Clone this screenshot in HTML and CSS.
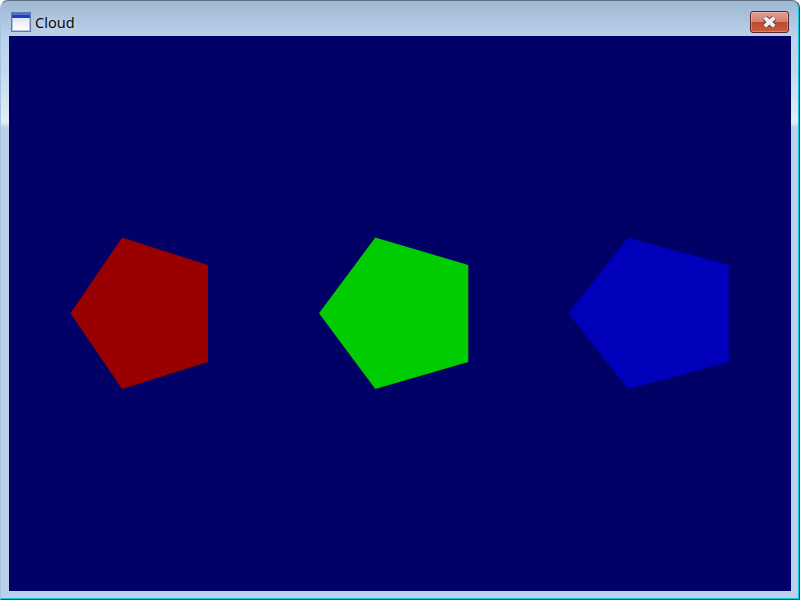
FILE: index.html
```html
<html lang="en">
<head>
  <meta charset="UTF-8">
  <meta name="viewport" content="width=device-width, initial-scale=1.0">
  <title>Cloud</title>
  <link rel="stylesheet" href="styles.css">
</head>
<body>
  <div class="window">
    <div class="titlebar">
      <svg class="app-icon" viewBox="0 0 20 20">
        <defs>
          <linearGradient id="iconBody" x1="0" y1="0" x2="0" y2="1">
            <stop offset="0" stop-color="#dfe5f2"/>
            <stop offset="1" stop-color="#ffffff"/>
          </linearGradient>
        </defs>
        <rect x="0.5" y="0.5" width="19" height="19" fill="#b4c0d8" stroke="#6478a4"/>
        <rect x="1" y="1" width="18" height="5" fill="#1c3fcc"/>
        <rect x="1" y="1" width="18" height="2" fill="#4a70e8"/>
        <rect x="2" y="6" width="16" height="12" fill="url(#iconBody)"/>
      </svg>
      <span class="title">Cloud</span>
      <button class="close-button">
        <svg viewBox="0 0 39 22">
          <path d="M14.8 6.8 L24.2 15.2 M24.2 6.8 L14.8 15.2" fill="none" stroke="#5a2c2a" stroke-width="5.6"/>
          <path d="M14.8 6.8 L24.2 15.2 M24.2 6.8 L14.8 15.2" fill="none" stroke="#eceef3" stroke-width="4"/>
        </svg>
      </button>
    </div>
    <div class="canvas">
      <svg class="scene" viewBox="0 0 782 555">
        <polygon class="red" points="61.5,277.3 113,201.5 199,229 199,326 113,353"/>
        <polygon class="green" points="310,277.3 366.3,201.5 459.3,229 459.3,326 366.3,353"/>
        <polygon class="blue" points="559.3,277.3 619,201.5 719.6,229 719.6,326 619,353"/>
      </svg>
    </div>
  </div>
</body>
</html>
```

FILE: styles.css
```css
* {
  box-sizing: border-box;
  margin: 0;
  padding: 0;
}

body {
  width: 800px;
  height: 600px;
  overflow: hidden;
  background: #ffffff;
}

.window {
  width: 800px;
  height: 600px;
  display: flex;
  flex-direction: column;
  padding: 0 8px 8px 8px;
  border: 1px solid #3c4a54;
  border-top-color: #5f6e7c;
  border-left-color: #a4c4e0;
  border-radius: 8px 8px 0 0;
  box-shadow: inset -1px -1px 0 #12c4e0;
  background: linear-gradient(180deg, #9fb8d3 0, #b9d1ea 35px, #c4d9ee 70px, #e2edf8 122px, #b9d1ea 126px, #b9d1ea 100%);
}

.titlebar {
  height: 35px;
  display: flex;
  align-items: center;
  flex-shrink: 0;
  padding: 10px 1px 3px 2px;
}

.app-icon {
  width: 20px;
  height: 20px;
  margin-right: 4px;
}

.title {
  font-family: "Noto Sans", sans-serif;
  font-size: 14.5px;
  color: #0a0a0a;
  text-shadow: 0 0 6px rgba(255, 255, 255, 0.6);
}

.close-button {
  margin-left: auto;
  margin-right: 1px;
  margin-top: -1px;
  width: 39px;
  height: 22px;
  border: 1px solid #5e2430;
  border-radius: 3px;
  background: linear-gradient(180deg, #e0a090 0, #d5806e 48%, #bc4a2e 52%, #c8603f 100%);
  box-shadow: inset 0 0 0 1px rgba(255, 255, 255, 0.25);
}

.close-button svg {
  display: block;
  width: 39px;
  height: 22px;
  margin: -1px;
}

.canvas {
  flex: 1;
  background: #000066;
}

.scene {
  display: block;
  width: 100%;
  height: 100%;
}

.red {
  fill: #990000;
}

.green {
  fill: #00cc00;
}

.blue {
  fill: #0000bb;
}
```
